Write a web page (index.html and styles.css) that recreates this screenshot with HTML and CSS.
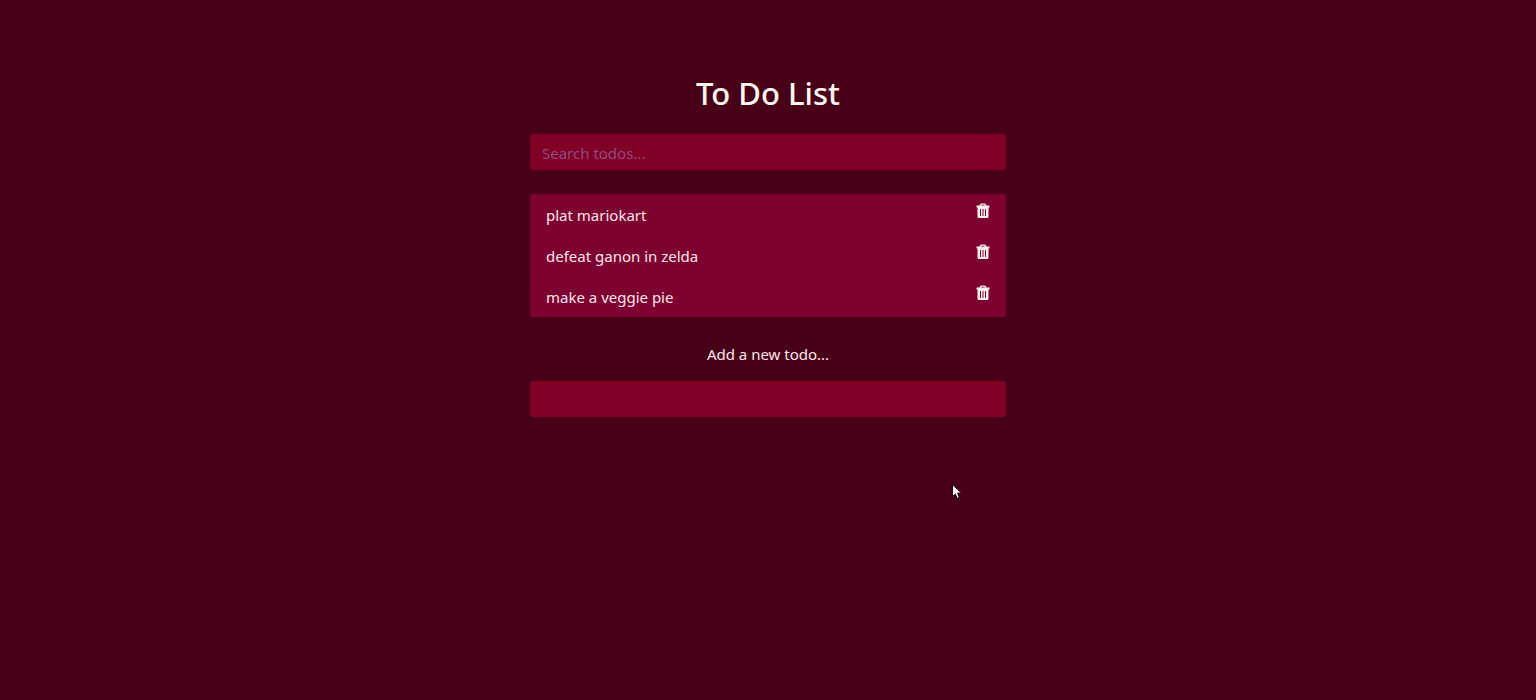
FILE: index.html
```html
<!DOCTYPE html>
<html lang="en">
<head>
<meta charset="utf-8">
<meta name="viewport" content="width=device-width, initial-scale=1">
<title>To Do List</title>
<link rel="stylesheet" href="styles.css">
</head>
<body>
<svg class="sprite" aria-hidden="true">
  <symbol id="trash" viewBox="0 0 14 16">
    <path fill-rule="evenodd" d="M1.500 4.500h11v9a1.500 1.500 0 0 1-1.500 1.500h-8A1.500 1.500 0 0 1 1.500 13.500zM4 6v7h1v-7zM6.500 6v7h1v-7zM9 6v7h1v-7zM.5 2.500h3L4.200 1.200Q4.500.5 5.200.5h3.600q.7 0 1 .7l.7 1.300h3v2H.5zM5 2.500h4l-.5-.8h-3z"/>
  </symbol>
</svg>
<main class="container">
  <header class="header">
    <h1 class="title">To Do List</h1>
    <form class="search">
      <input class="field" type="text" name="search" placeholder="Search todos..." aria-label="Search todos">
    </form>
  </header>
  <ul class="todos">
    <li class="todo"><span>plat mariokart</span><button class="delete" type="button" aria-label="Delete plat mariokart"><svg class="icon"><use href="#trash"/></svg></button></li>
    <li class="todo"><span>defeat ganon in zelda</span><button class="delete" type="button" aria-label="Delete defeat ganon in zelda"><svg class="icon"><use href="#trash"/></svg></button></li>
    <li class="todo"><span>make a veggie pie</span><button class="delete" type="button" aria-label="Delete make a veggie pie"><svg class="icon"><use href="#trash"/></svg></button></li>
  </ul>
  <form class="add">
    <label class="add-label" for="add">Add a new todo...</label>
    <input class="field" type="text" id="add" name="add">
  </form>
</main>
<svg class="pointer" viewBox="0 0 10 15" aria-hidden="true"><path d="M.5.5v12l2.800-2.500 1.900 4.300 2.200-.9-1.900-4.300h4z"/></svg>
</body>
</html>
```
FILE: styles.css
```css
* {
  box-sizing: border-box;
}

body {
  margin: 0;
  min-height: 100vh;
  background: #480018;
  color: #ffe6ea;
  font: 15px/24px "Segoe UI", "Noto Sans", sans-serif;
}

.sprite {
  display: none;
}

.container {
  max-width: 500px;
  margin: 0 auto;
  padding: 74px 12px 0;
}

.header {
  margin-bottom: 24px;
  text-align: center;
}

.title {
  margin: 0 0 22px;
  color: #fff8f0;
  font-size: 31px;
  font-weight: 500;
  line-height: 38px;
}

.field {
  display: block;
  width: 100%;
  height: 36px;
  padding: 7px 12px 5px;
  border: 0;
  border-radius: 3px;
  background: #800026;
  color: inherit;
  font: inherit;
}

.field::placeholder {
  color: #954880;
  opacity: 1;
}

.todos {
  margin: 0 0 25px;
  padding: 0;
  overflow: hidden;
  border-radius: 3px;
  background: #7c0030;
  list-style: none;
}

.todo {
  display: flex;
  align-items: flex-start;
  justify-content: space-between;
  height: 41px;
  padding: 9px 16px;
}

.delete {
  display: block;
  padding: 0;
  border: 0;
  background: none;
  color: #fff0f0;
  cursor: pointer;
}

.icon {
  display: block;
  width: 14px;
  height: 16px;
  fill: currentColor;
}

.add {
  text-align: center;
}

.add-label {
  display: block;
  margin-bottom: 15px;
}

.pointer {
  position: absolute;
  left: 952px;
  top: 484px;
  width: 10px;
  height: 15px;
  fill: #fff;
  stroke: #24000c;
  stroke-width: 1px;
}
```
